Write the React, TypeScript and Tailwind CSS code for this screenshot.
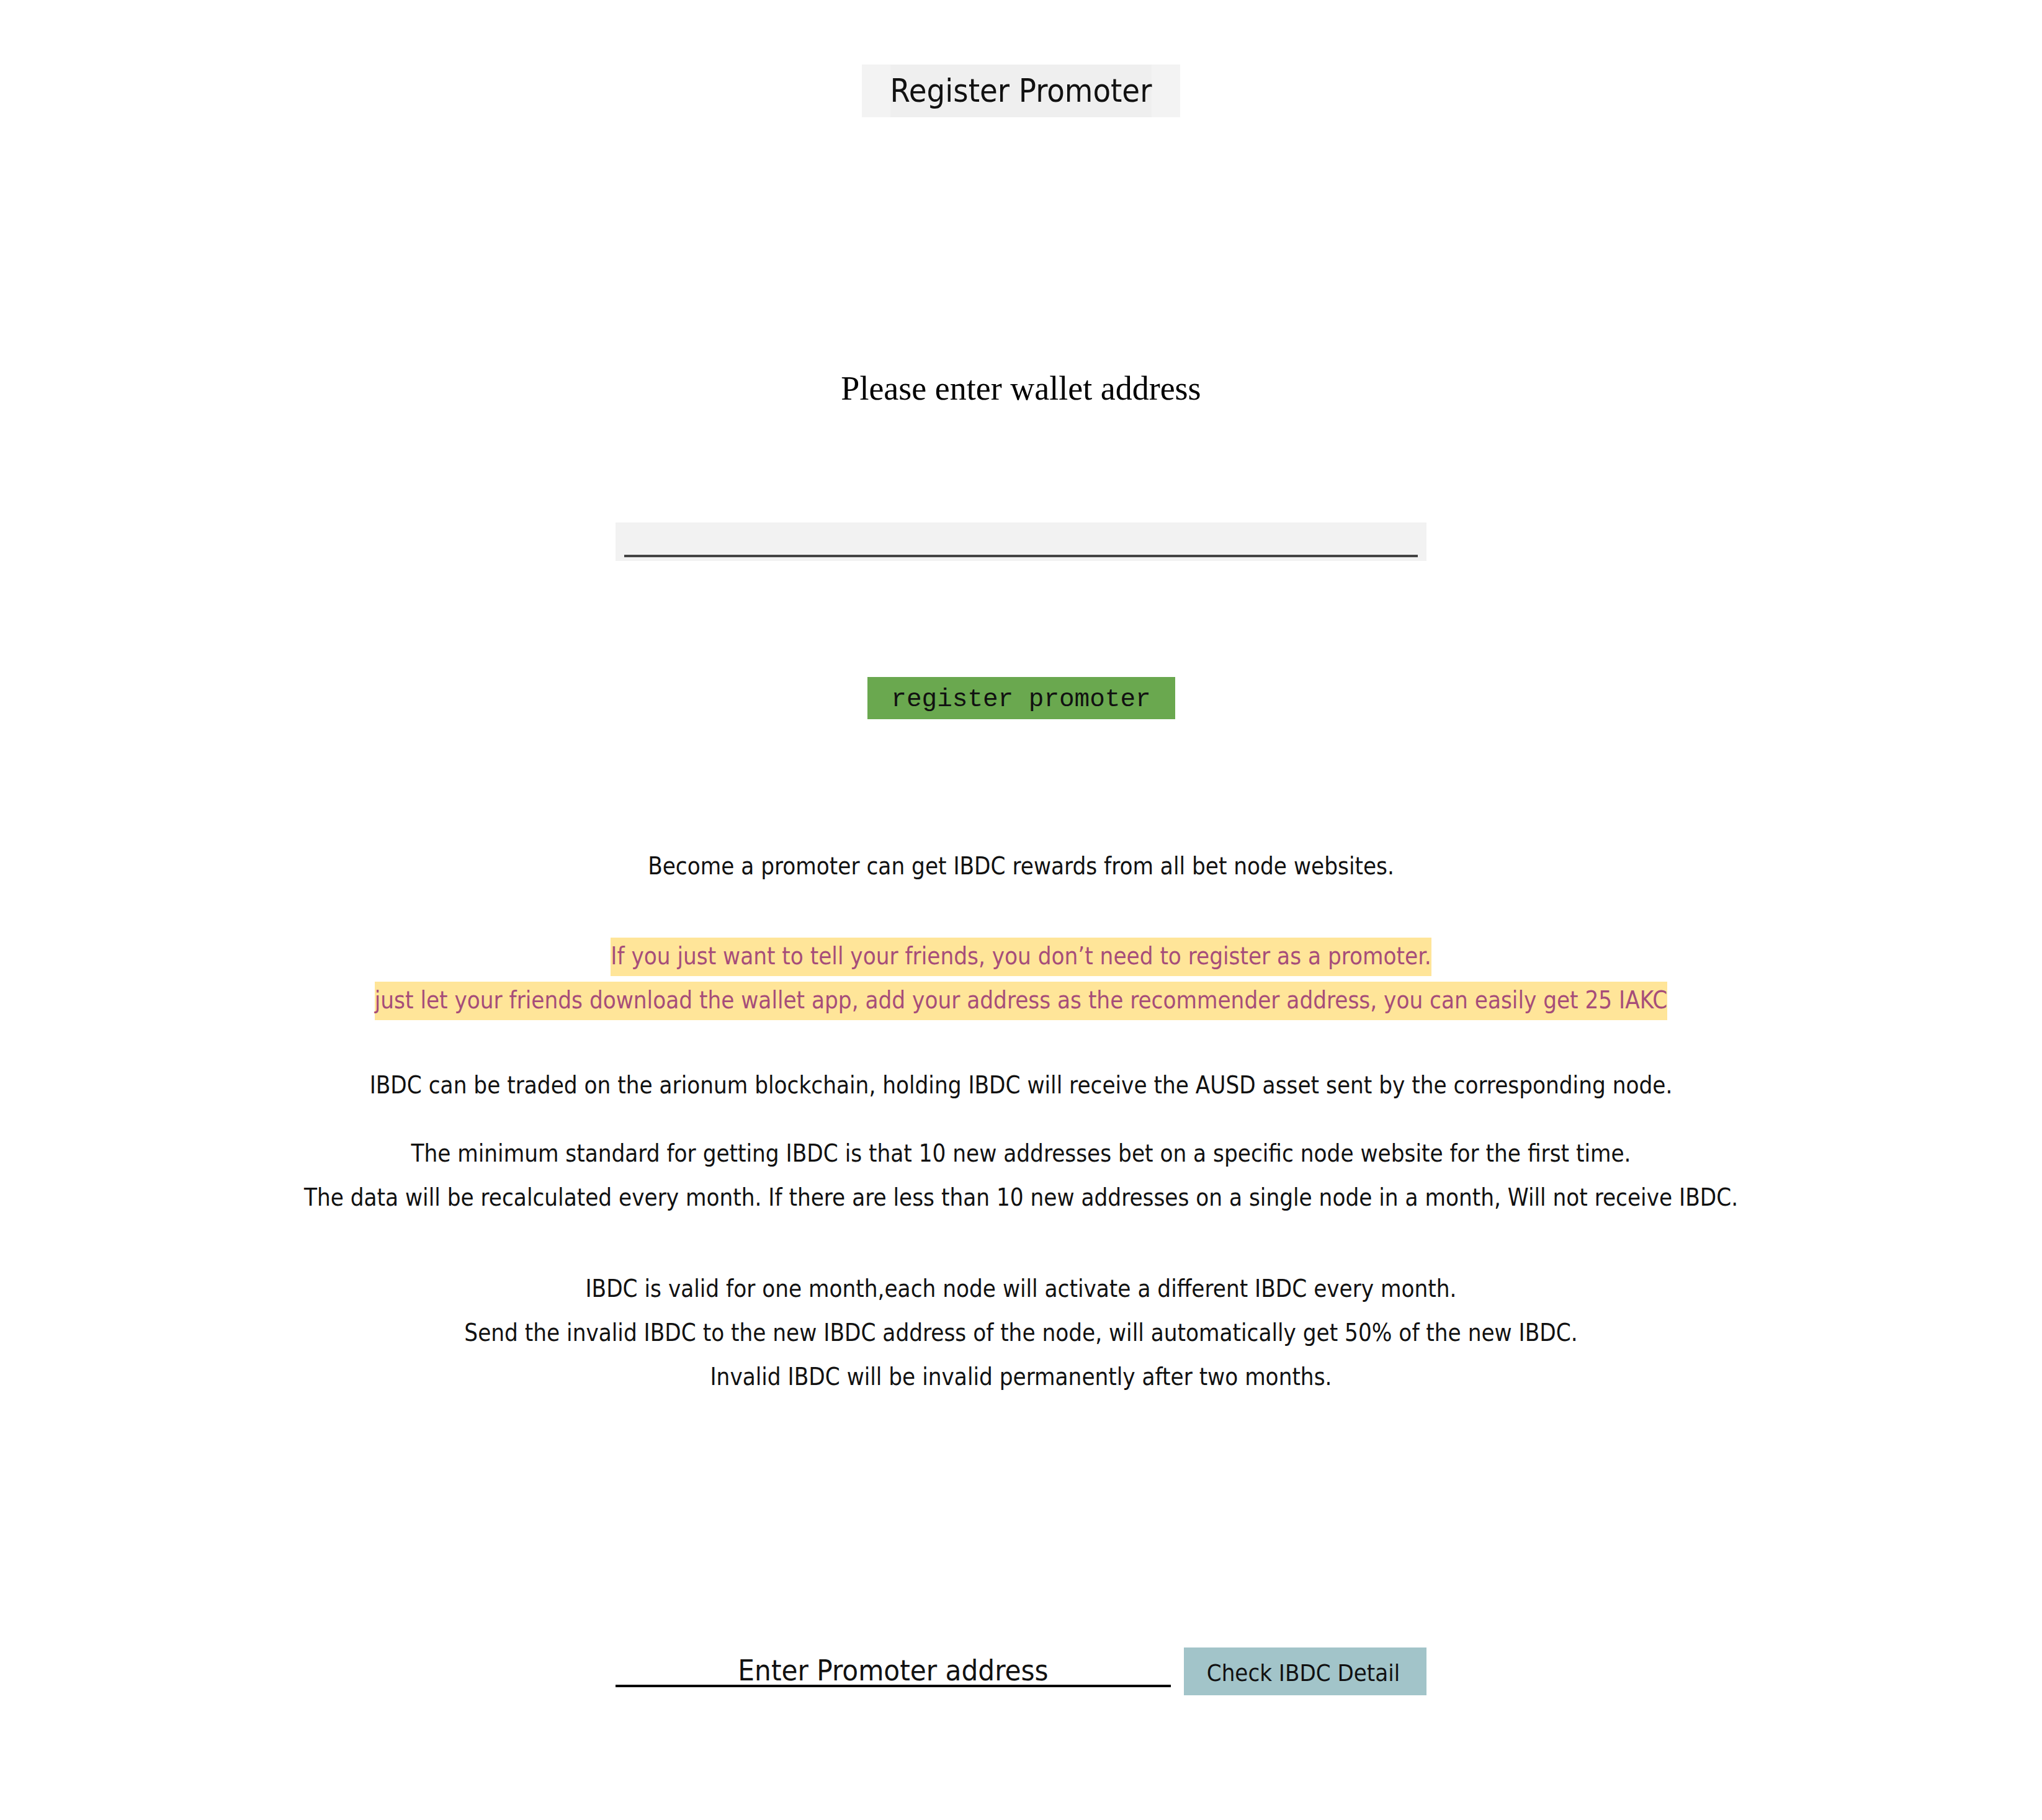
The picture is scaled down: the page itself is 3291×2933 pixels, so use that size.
import React from "react";

const sans = "font-['DejaVu_Sans_Condensed','DejaVu_Sans',sans-serif] font-stretch-condensed";

function Line({ children, className = "" }: { children: React.ReactNode; className?: string }) {
  return (
    <div className={`h-[71px] flex items-center justify-center whitespace-nowrap ${className}`}>{children}</div>
  );
}

function Mark({ children }: { children: React.ReactNode }) {
  return (
    <span className="inline-flex items-center h-[62px] bg-[#ffe599] text-[#a64d79]">{children}</span>
  );
}

export default function App() {
  return (
    <div className={`min-h-[2933px] w-full bg-white flex flex-col items-center pt-[104px] pb-[202px] text-black ${sans}`}>
      <div className="h-[85px] flex bg-[#f3f3f3] px-[46px]">
        <span className="h-full flex items-center pb-[2px] bg-[#efefef] text-[52px] text-[#111]">Register Promoter</span>
      </div>

      <div className="mt-[402px] h-[70px] flex items-center font-['Liberation_Serif',serif] text-[54px] font-stretch-normal">
        Please enter wallet address
      </div>

      <div className="mt-[181px] w-[1307px] h-[62px] bg-[#f2f2f2] px-[14px] pb-[6px] flex items-end">
        <input
          type="text"
          aria-label="wallet address"
          className="w-full h-[40px] bg-transparent border-b-4 border-[#444] outline-none text-[38px]"
        />
      </div>

      <button className="mt-[187px] h-[68px] w-[496px] bg-[#6aa84f] flex items-center justify-center pt-[6px] font-['Liberation_Mono',monospace] font-stretch-normal text-[41px] text-[#111]">
        register promoter
      </button>

      <div className="mt-[202px] flex flex-col items-center text-[38.2px] text-[#111]">
        <Line>Become a promoter can get IBDC rewards from all bet node websites.</Line>
        <Line className="mt-[74px]">
          <Mark>If you just want to tell your friends, you don’t need to register as a promoter.</Mark>
        </Line>
        <Line>
          <Mark>just let your friends download the wallet app, add your address as the recommender address, you can easily get 25 IAKC</Mark>
        </Line>
        <Line className="mt-[66px]">
          IBDC can be traded on the arionum blockchain, holding IBDC will receive the AUSD asset sent by the corresponding node.
        </Line>
        <Line className="mt-[39px]">
          The minimum standard for getting IBDC is that 10 new addresses bet on a specific node website for the first time.
        </Line>
        <Line>
          The data will be recalculated every month. If there are less than 10 new addresses on a single node in a month, Will not receive IBDC.
        </Line>
        <Line className="mt-[76px]">IBDC is valid for one month,each node will activate a different IBDC every month.</Line>
        <Line>Send the invalid IBDC to the new IBDC address of the node, will automatically get 50% of the new IBDC.</Line>
        <Line>Invalid IBDC will be invalid permanently after two months.</Line>
      </div>

      <div className="mt-[400px] flex items-start gap-[21px]">
        <input
          type="text"
          placeholder="Enter Promoter address"
          className="w-[895px] h-[64px] pt-[14px] border-b-4 border-black bg-transparent outline-none text-center text-[47px] font-light text-[#111] placeholder:text-[#111]"
        />
        <button className="w-[391px] h-[77px] bg-[#a2c4c9] flex items-center justify-center pt-[5px] pr-[6px] text-[38px] text-[#111]">
          Check IBDC Detail
        </button>
      </div>
    </div>
  );
}
